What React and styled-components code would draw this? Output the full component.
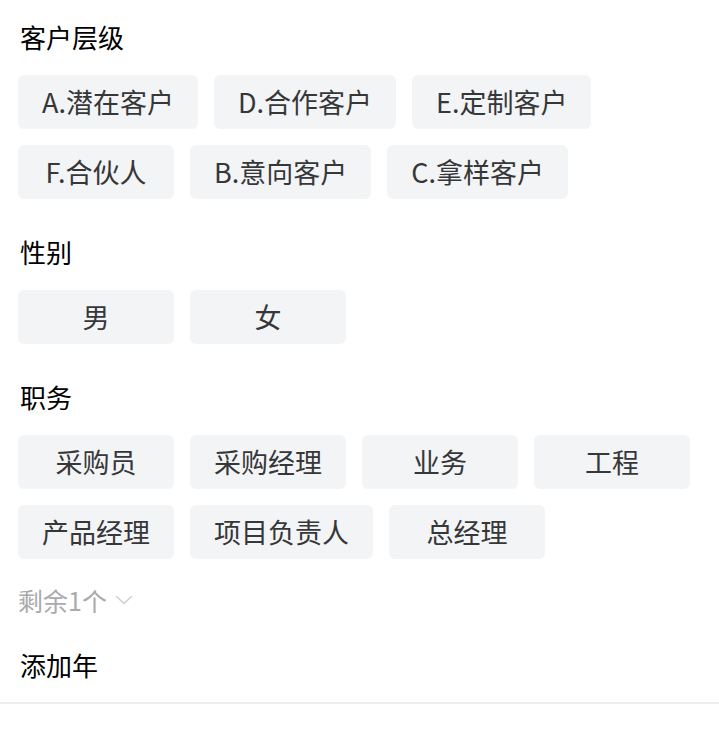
import React from "react";
import styled, { createGlobalStyle } from "styled-components";

//#region Styled components

const col_title = "#000000";
const col_chip_text = "#363739";
const col_chip_bg = "#f3f4f5";
const col_muted = "#a9aaac";

const GlobalStyle = createGlobalStyle`
    body {
        margin: 0;
        background: #ffffff;
        font-family: "Noto Sans CJK SC", "Noto Sans", sans-serif;
    }
`;

const Page = styled.div`
    width: 719px;
    padding-top: 19px;
`;

const Body = styled.div`
    padding: 0 18px;
`;

const Section = styled.section`
    margin-bottom: ${(p) => p.gap}px;
`;

const Title = styled.div`
    height: 36px;
    line-height: 36px;
    font-size: 26px;
    color: ${col_title};
    padding-left: 2px;
    margin-bottom: 20px;
`;

const ChipList = styled.div`
    display: flex;
    flex-wrap: wrap;
    gap: 16px;
`;

const Chip = styled.div`
    box-sizing: border-box;
    min-width: 156px;
    height: 54px;
    line-height: 54px;
    padding: 0 24px;
    border-radius: 6px;
    background: ${col_chip_bg};
    color: ${col_chip_text};
    font-size: 27px;
    text-align: center;
    white-space: nowrap;
`;

const More = styled.div`
    display: flex;
    align-items: center;
    height: 36px;
    margin-top: 23px;
    margin-bottom: 29px;
    font-size: 25px;
    color: ${col_muted};
    gap: 8px;
`;

const PlainTitle = styled(Title)`
    margin-bottom: 19px;
`;

const Divider = styled.div`
    height: 2px;
    background: #eeeeee;
`;

//#endregion

const groups = [
    { title: "客户层级", items: ["A.潜在客户", "D.合作客户", "E.定制客户", "F.合伙人", "B.意向客户", "C.拿样客户"] },
    { title: "性别", items: ["男", "女"] },
    { title: "职务", items: ["采购员", "采购经理", "业务", "工程", "产品经理", "项目负责人", "总经理"], rest: 1 },
];

const Chevron = () => (
    <svg width="18" height="12" viewBox="0 0 18 12" fill="none">
        <path d="M1.5 2.5 L9 9.5 L16.5 2.5" stroke="#cfd0d2" strokeWidth="1.6" strokeLinecap="round" strokeLinejoin="round" />
    </svg>
);

const App = () => {
    return (
        <Page>
            <GlobalStyle />
            <Body>
                {groups.map((g) => (
                    <Section key={g.title} gap={g.rest ? 0 : 35}>
                        <Title>{g.title}</Title>
                        <ChipList>
                            {g.items.map((it) => (
                                <Chip key={it}>{it}</Chip>
                            ))}
                        </ChipList>
                        {g.rest ? (
                            <More>
                                剩余{g.rest}个 <Chevron />
                            </More>
                        ) : null}
                    </Section>
                ))}
                <PlainTitle>添加年</PlainTitle>
            </Body>
            <Divider />
        </Page>
    );
};

export default App;
